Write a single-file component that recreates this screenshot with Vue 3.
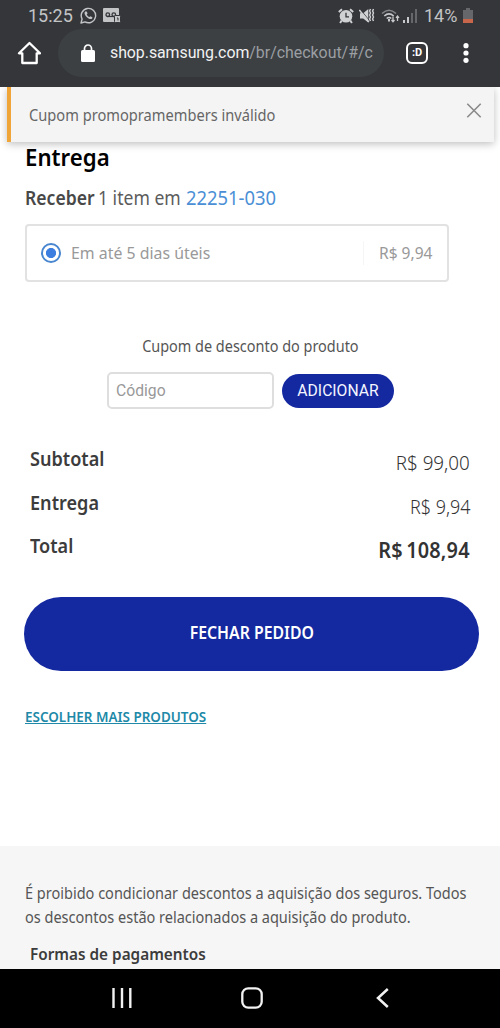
<script setup>
const totals = [
  { id: 'sub', label: 'Subtotal', value: 'R$ 99,00' },
  { id: 'ship', label: 'Entrega', value: 'R$ 9,94' },
  { id: 'total', label: 'Total', value: 'R$ 108,94' },
]
</script>

<template>
  <div class="phone">
    <header class="chrome">
      <div class="status">
        <span class="clock">15:25</span>
        <svg class="wa" width="17" height="17" viewBox="0 0 17 17" fill="none" stroke="#c3c4c6">
          <path d="M1 16l1.1-4A7.2 7.2 0 1 1 5 14.900z" stroke-width="1.4" stroke-linejoin="round" />
          <path d="M5.100 4.400c-1.300 1.300-.3 3.700 1.500 5.500s4.300 2.900 5.600 1.500l.2-1.200-2-1-1 .9c-1-.3-2.300-1.600-2.700-2.600l.9-1-.9-2.100z" fill="#c3c4c6" stroke="none" />
        </svg>
        <svg class="vm" width="18" height="15" viewBox="0 0 18 15">
          <path d="M1 0h14q1 0 1 1v12q0 1-1 1H1q-1 0-1-1V1q0-1 1-1z" fill="#c3c4c6" />
          <path d="M4.500 8.500h7" stroke="#35363a" stroke-width="1.200" />
          <circle cx="4.800" cy="6.700" r="1.800" fill="none" stroke="#35363a" stroke-width="1.300" />
          <circle cx="10.800" cy="6.700" r="1.800" fill="none" stroke="#35363a" stroke-width="1.300" />
          <rect x="11.500" y="7.500" width="6" height="7" rx="1" fill="#c3c4c6" stroke="#35363a" />
          <path d="M14 10h1v2.500" fill="none" stroke="#35363a" />
        </svg>
        <span class="gap"></span>
        <svg class="alarm" width="16" height="16" viewBox="0 0 16 16">
          <circle cx="8" cy="8.300" r="6.300" fill="#d0d1d3" />
          <path d="M.8 4L4 1.300M15.200 4L12 1.300M3.700 12.500l-1.600 2.500M12.300 12.500l1.600 2.500" stroke="#d0d1d3" stroke-width="2" />
          <path d="M8 4.800v4h3" fill="none" stroke="#35363a" stroke-width="1.300" />
        </svg>
        <svg class="mute" width="16" height="16" viewBox="0 0 16 16">
          <path d="M1 5.200h3.200L9.300 1v13.500l-5.100-4H1z" fill="#d0d1d3" />
          <path d="M1.200 1.200l9 11" stroke="#35363a" stroke-width=".8" />
          <path d="M.3 2l9.500 12" stroke="#d0d1d3" stroke-width="1.500" />
          <path d="M11.500 1l-.9 2 .9 2-.9 2 .9 2-.9 2 .9 2M14.500 1l-.9 2 .9 2-.9 2 .9 2-.9 2 .9 2" fill="none" stroke="#d0d1d3" stroke-width="1.400" />
        </svg>
        <svg class="wifi" width="19" height="16" viewBox="0 0 19 16" fill="none" stroke="#c8c9cb" stroke-width="1.600">
          <path d="M1 5.500q7-6.500 14 0" stroke="#85868a" />
          <path d="M3.300 8q4.700-4.300 9.400 0M5.700 10.500q2.300-2 4.600 0" />
          <path d="M8 11v2.500" stroke-width="2" />
          <path d="M12 8.500v5M10.500 12l1.500 1.800 1.500-1.800M16.500 13V8M15 9.800L16.500 8 18 9.800" stroke-width="1.300" />
        </svg>
        <svg class="signal" width="14" height="14" viewBox="0 0 14 14">
          <path d="M0 11h2v3H0zM4 8h2v6H4z" fill="#c8c9cb" />
          <path d="M8 4h2v10H8zM12 0h2v14h-2z" fill="#66676b" />
        </svg>
        <span class="pct">14%</span>
        <svg class="batt" width="10" height="15" viewBox="0 0 10 15">
          <path d="M3 0h4v2h3v9H0V2h3z" fill="#66676a" />
          <path d="M0 11h10v4H0z" fill="#c7664a" />
        </svg>
      </div>
      <div class="toolbar">
        <svg class="home" width="24" height="24" viewBox="0 0 24 24" fill="none" stroke="#fff" stroke-width="2.300" stroke-linejoin="round">
          <path d="M12.500 2L2 12.300H5.300V22h14.400v-9.700H23z" />
        </svg>
        <div class="pill">
          <svg width="14" height="18" viewBox="0 0 14 18">
            <path d="M3.500 8V4.500a3.500 3.500 0 0 1 7 0V8" fill="none" stroke="#fff" stroke-width="1.700" />
            <rect y="6" width="14" height="12" rx="1.500" fill="#fff" />
          </svg>
          <div class="url"><b>shop.samsung.com</b>/br/checkout/#/c</div>
        </div>
        <div class="tabs">:D</div>
        <svg class="more" width="6" height="20" viewBox="0 0 6 20" fill="#fff">
          <circle cx="3" cy="2.700" r="2.600" /><circle cx="3" cy="10" r="2.600" /><circle cx="3" cy="17.300" r="2.600" />
        </svg>
      </div>
    </header>

    <main class="page">
      <div class="toast">
        <span class="toast-text">Cupom promopramembers inválido</span>
        <svg width="16" height="16" viewBox="0 0 16 16" stroke="#8a8a8a" stroke-width="1.600"><path d="M1.300 .8l13.400 13.400M14.700 .8L1.300 14.200" /></svg>
      </div>

      <h2><span>Entrega</span></h2>
      <p class="receive"><b>Receber</b><span class="mid">1 item em</span><a>22251-030</a></p>
      <div class="option">
        <span class="radio"></span>
        <span class="when">Em até 5 dias úteis</span>
        <span class="price"><span>R$ 9,94</span></span>
      </div>

      <p class="coupon-title"><span>Cupom de desconto do produto</span></p>
      <div class="coupon">
        <div class="field">Código</div>
        <button class="add">ADICIONAR</button>
      </div>

      <div v-for="t in totals" :key="t.id" class="row" :class="t.id">
        <span class="label">{{ t.label }}</span>
        <span class="value">{{ t.value }}</span>
      </div>

      <button class="checkout"><span>FECHAR PEDIDO</span></button>
      <a class="more-products">ESCOLHER MAIS PRODUTOS</a>
    </main>

    <footer class="foot">
      <p><span>É proibido condicionar descontos a aquisição dos seguros. Todos</span><br><span>os descontos estão relacionados a aquisição do produto.</span></p>
      <h3><span>Formas de pagamentos</span></h3>
    </footer>

    <nav class="nav">
      <svg width="20" height="20" viewBox="0 0 20 20" stroke="#f2f2f2" stroke-width="2.400"><path d="M1.500 0v20M10 0v20M18.300 0v20" /></svg>
      <svg width="22" height="22" viewBox="0 0 22 22" fill="none" stroke="#f2f2f2" stroke-width="2.300"><rect x="1.300" y="1.300" width="19.400" height="19.400" rx="6" /></svg>
      <svg width="13" height="20" viewBox="0 0 13 20" fill="none" stroke="#f2f2f2" stroke-width="2.500"><path d="M11.800 1L2 10l9.800 9" /></svg>
    </nav>
  </div>
</template>

<style>
body { margin: 0; background: #fff; }
</style>

<style scoped>
* { box-sizing: border-box; }
.phone { width: 500px; height: 1028px; display: flex; flex-direction: column; overflow: hidden; background: #fff; font-family: "Noto Sans", sans-serif; color: #3c3c3c; white-space: nowrap; }
p, h2, h3 { margin: 0; }
button { border: 0; padding: 0; font-family: inherit; }
svg { display: block; flex: none; }
.phone span, .url { display: inline-block; }

.chrome { height: 87px; background: #35363a; font-family: Roboto, sans-serif; flex: none; }
.status { height: 29px; display: flex; align-items: center; padding: 2px 27px 0 28px; color: #c3c4c6; font-size: 18px; }
.clock { width: 45px; }
.wa { margin-left: 7px; }
.vm { margin-left: 6px; }
.gap { flex: 1; }
.mute { margin-left: 5px; }
.wifi { margin-left: 6px; }
.signal { margin-left: 3px; }
.pct { margin-left: 7px; width: 35px; }
.batt { margin-left: 4px; }
.toolbar { height: 48px; display: flex; align-items: center; padding-left: 17px; }
.pill { width: 326px; height: 48px; margin-left: 17px; padding-left: 23px; border-radius: 24px; background: #3c4043; display: flex; align-items: center; }
.url { margin-left: 15px; width: 264px; overflow: hidden; font-size: 15.900px; line-height: 24px; color: #9b9ea2; }
.url b { font-weight: 400; color: #f1f1f2; letter-spacing: -.05px; }
.tabs { width: 22px; height: 22px; margin-left: 22px; border: 2px solid #fff; border-radius: 6px; color: #fff; font-size: 11px; font-weight: 700; line-height: 17px; text-align: center; }
.more { margin-left: 35px; }

.page { position: relative; height: 759px; flex: none; padding: 0 21px 0 25px; }
.toast { position: absolute; left: 7px; top: 0; width: 487px; height: 55px; padding: 0 12px 0 18px; background: #f4f4f4; border-left: 4px solid #efa537; box-shadow: 0 2px 8px rgba(0, 0, 0, .26); display: flex; justify-content: space-between; align-items: center; clip-path: inset(0 -20px -20px -20px); }
.toast svg { margin-bottom: 8px; }
.toast-text { font-size: 16px; line-height: 20px; color: #666; transform: scaleX(.915); transform-origin: left; }
h2 { padding-top: 54px; height: 98px; font-size: 24px; line-height: 32px; font-weight: 600; color: #000; }
h2 span { transform: scaleX(.925); transform-origin: left; }
.receive { height: 39px; display: flex; font-size: 19px; line-height: 26px; color: #5c5c5c; }
.receive > * { transform-origin: left; transform: scaleX(.925); }
.receive b { width: 72.500px; font-weight: 600; color: #484848; }
.receive .mid { width: 88px; }
.receive a { color: #4a8fd6; transform: scaleX(.968); }
.option { width: 424px; height: 58px; border: 2px solid #e2e2e2; border-radius: 4px; display: flex; align-items: center; padding: 0 15px 0 14px; font-size: 17px; color: #999; }
.radio { width: 20px; height: 20px; border: 2px solid #4886d0; border-radius: 50%; background: radial-gradient(circle, #3b7ee0 4.700px, #fff 5.400px); }
.when { margin: -2px 0 0 10px; flex: 1; transform: scaleX(.933); transform-origin: left; }
.price { border-left: 1px solid #f6f6f6; padding-left: 15px; width: 69px; height: 24px; line-height: 24px; }
.price span { transform: scaleX(.914); transform-origin: left; }
.coupon-title { margin-top: 51px; height: 39px; text-align: center; font-size: 16px; line-height: 26px; color: #555; }
.coupon-title span { transform: translateX(-1.500px) scaleX(.903); }
.coupon { height: 37px; display: flex; align-items: center; padding-left: 82px; font-family: Roboto, sans-serif; }
.field { width: 167px; height: 37px; border: 2px solid #dedede; border-radius: 5px; padding-left: 7px; font-size: 15.700px; line-height: 33px; color: #999; }
.add { width: 112px; height: 34px; margin-left: 8px; border-radius: 17px; background: #1428a0; color: #f4f6ff; font-size: 15.700px; font-family: Roboto, sans-serif; }
.row { height: 43.500px; padding: 0 9px 0 5px; display: flex; justify-content: space-between; line-height: 28px; font-size: 19.500px; }
.row.sub { margin-top: 36px; }
.label { font-weight: 600; transform: scaleX(.928); transform-origin: left; }
.value { padding-top: 4px; font-size: 20px; font-weight: 330; color: #333; transform: scaleX(.94); transform-origin: right; }
.ship .value { transform: scaleX(.895); }
.total .value { font-size: 21px; font-weight: 600; color: #333; transform: scaleX(.946); word-spacing: -2px; letter-spacing: .2px; }
.checkout { display: block; width: 455px; height: 74px; margin: 21px 0 0 -1px; padding-bottom: 2px; border-radius: 37px; background: #1428a0; color: #fff; font-size: 17px; font-weight: 600; }
.checkout span { transform: scaleX(.93); }
.more-products { display: inline-block; margin: 34px 0 0 -.5px; font-size: 14.500px; line-height: 22px; font-weight: 600; color: #2189a8; text-decoration: underline; transform: scaleX(.928); transform-origin: left; }

.foot { height: 123px; flex: none; background: #f6f6f6; padding: 35px 25px 0; }
.foot span { transform-origin: left; transform: scaleX(.907); }
.foot p { font-size: 16px; line-height: 24px; color: #555; }
.foot h3 { margin: 13px 0 0 5px; font-size: 16.500px; line-height: 24px; font-weight: 600; color: #3c3c3c; }
.foot h3 span { transform: scaleX(.928); }
.nav { flex: 1; background: #000; display: flex; align-items: center; padding: 0 0 2px 112px; }
.nav svg:nth-child(2) { margin-left: 109px; }
.nav svg:nth-child(3) { margin-left: 113px; }
</style>
